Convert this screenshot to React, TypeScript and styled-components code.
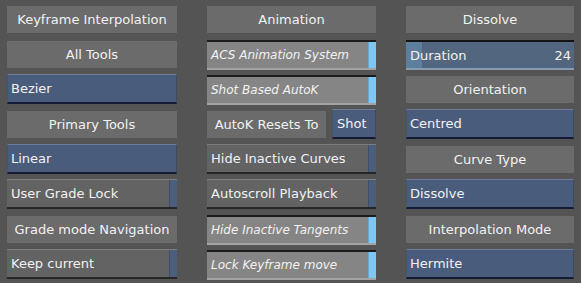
import styled, { createGlobalStyle, css } from "styled-components";

const GlobalStyle = createGlobalStyle`
  html, body {
    margin: 0;
    padding: 0;
    background: #545454;
  }
  body {
    font-family: "DejaVu Sans", "Liberation Sans", sans-serif;
  }
`;

type Item =
  | { kind: "label"; text: string }
  | { kind: "menu"; text: string }
  | { kind: "toggle"; text: string; on?: boolean }
  | { kind: "number"; text: string; value: string }
  | { kind: "split"; text: string; menu: string };

const columns: Item[][] = [
  [
    { kind: "label", text: "Keyframe Interpolation" },
    { kind: "label", text: "All Tools" },
    { kind: "menu", text: "Bezier" },
    { kind: "label", text: "Primary Tools" },
    { kind: "menu", text: "Linear" },
    { kind: "toggle", text: "User Grade Lock" },
    { kind: "label", text: "Grade mode Navigation" },
    { kind: "toggle", text: "Keep current" },
  ],
  [
    { kind: "label", text: "Animation" },
    { kind: "toggle", text: "ACS Animation System", on: true },
    { kind: "toggle", text: "Shot Based AutoK", on: true },
    { kind: "split", text: "AutoK Resets To", menu: "Shot" },
    { kind: "toggle", text: "Hide Inactive Curves" },
    { kind: "toggle", text: "Autoscroll Playback" },
    { kind: "toggle", text: "Hide Inactive Tangents", on: true },
    { kind: "toggle", text: "Lock Keyframe move", on: true },
  ],
  [
    { kind: "label", text: "Dissolve" },
    { kind: "number", text: "Duration", value: "24" },
    { kind: "label", text: "Orientation" },
    { kind: "menu", text: "Centred" },
    { kind: "label", text: "Curve Type" },
    { kind: "menu", text: "Dissolve" },
    { kind: "label", text: "Interpolation Mode" },
    { kind: "menu", text: "Hermite" },
  ],
];

export default function App() {
  return (
    <>
      <GlobalStyle />
      <Panel>
        {columns.map((col, ci) => (
          <Column key={ci}>
            {col.map((item, i) => (
              <Slot key={i}>{renderItem(item)}</Slot>
            ))}
          </Column>
        ))}
      </Panel>
    </>
  );
}

function renderItem(item: Item) {
  switch (item.kind) {
    case "label":
      return <Label>{item.text}</Label>;
    case "menu":
      return <Menu>{item.text}</Menu>;
    case "toggle":
      return (
        <Toggle $on={!!item.on}>
          <ToggleText $on={!!item.on}>{item.text}</ToggleText>
          <Indicator $on={!!item.on} />
        </Toggle>
      );
    case "number":
      return (
        <NumberField>
          <Fill />
          <NumberText>{item.text}</NumberText>
          <NumberText>{item.value}</NumberText>
        </NumberField>
      );
    case "split":
      return (
        <Split>
          <Label $grow>{item.text}</Label>
          <SmallMenu>{item.menu}</SmallMenu>
        </Split>
      );
  }
}

const Panel = styled.div`
  display: grid;
  grid-template-columns: 170px 169px 168px;
  column-gap: 30px;
  padding: 4px 0 0 7px;
  width: 581px;
  height: 283px;
  box-sizing: border-box;
  overflow: hidden;
`;

const Column = styled.div`
  display: flex;
  flex-direction: column;
`;

const Slot = styled.div`
  height: 35px;
  display: flex;
  align-items: flex-start;
`;

const textBase = css`
  font-size: 13px;
  color: #f2f2f2;
  white-space: nowrap;
`;

const Label = styled.div<{ $grow?: boolean }>`
  ${textBase}
  margin-top: 2px;
  height: 27px;
  width: ${(p) => (p.$grow ? "auto" : "100%")};
  flex: ${(p) => (p.$grow ? "1" : "none")};
  background: #6b6b6b;
  display: flex;
  align-items: center;
  justify-content: center;
`;

const menuBase = css`
  ${textBase}
  height: 30px;
  box-sizing: border-box;
  background: #4a5c7b;
  border-top: 1px solid #6c7e9b;
  border-bottom: 2px solid #161b35;
  border-left: 1px solid #44536e;
  border-right: 1px solid #3c4a63;
  display: flex;
  align-items: center;
`;

const Menu = styled.div`
  ${menuBase}
  width: 100%;
  padding-left: 3px;
`;

const SmallMenu = styled.div`
  ${menuBase}
  width: 44px;
  padding-left: 4px;
`;

const Split = styled.div`
  display: flex;
  width: 100%;
  gap: 6px;
  align-items: flex-start;
`;

const Toggle = styled.div<{ $on: boolean }>`
  width: 100%;
  height: 30px;
  display: flex;
  box-sizing: border-box;
  ${(p) =>
    p.$on
      ? css`
          margin-top: 1px;
          border-top: 2px solid #1c1c1c;
          border-bottom: 2px solid #a3a3a3;
          background: #858585;
        `
      : css`
          border-top: 1px solid #7d7d7d;
          border-bottom: 2px solid #262626;
          background: #636363;
        `}
`;

const ToggleText = styled.div<{ $on: boolean }>`
  ${textBase}
  flex: 1;
  display: flex;
  align-items: center;
  padding-left: 4px;
  font-style: ${(p) => (p.$on ? "italic" : "normal")};
  font-size: ${(p) => (p.$on ? "12px" : "13px")};
`;

const Indicator = styled.div<{ $on: boolean }>`
  width: 7px;
  margin-left: 1px;
  background: ${(p) => (p.$on ? "#7ec6f4" : "#4c5e7d")};
  border-left: 1px solid ${(p) => (p.$on ? "#6aa8d0" : "#3f4d66")};
`;

const NumberField = styled.div`
  ${textBase}
  position: relative;
  width: 100%;
  height: 30px;
  box-sizing: border-box;
  margin-top: 1px;
  background: #52667f;
  border-top: 2px solid #141414;
  border-bottom: 2px solid #8a9ab0;
  display: flex;
  align-items: center;
  justify-content: space-between;
  padding: 0 3px 0 4px;
`;

const Fill = styled.div`
  position: absolute;
  left: 0;
  top: 0;
  bottom: 0;
  width: 16px;
  background: #5d7f9e;
`;

const NumberText = styled.span`
  position: relative;
`;
